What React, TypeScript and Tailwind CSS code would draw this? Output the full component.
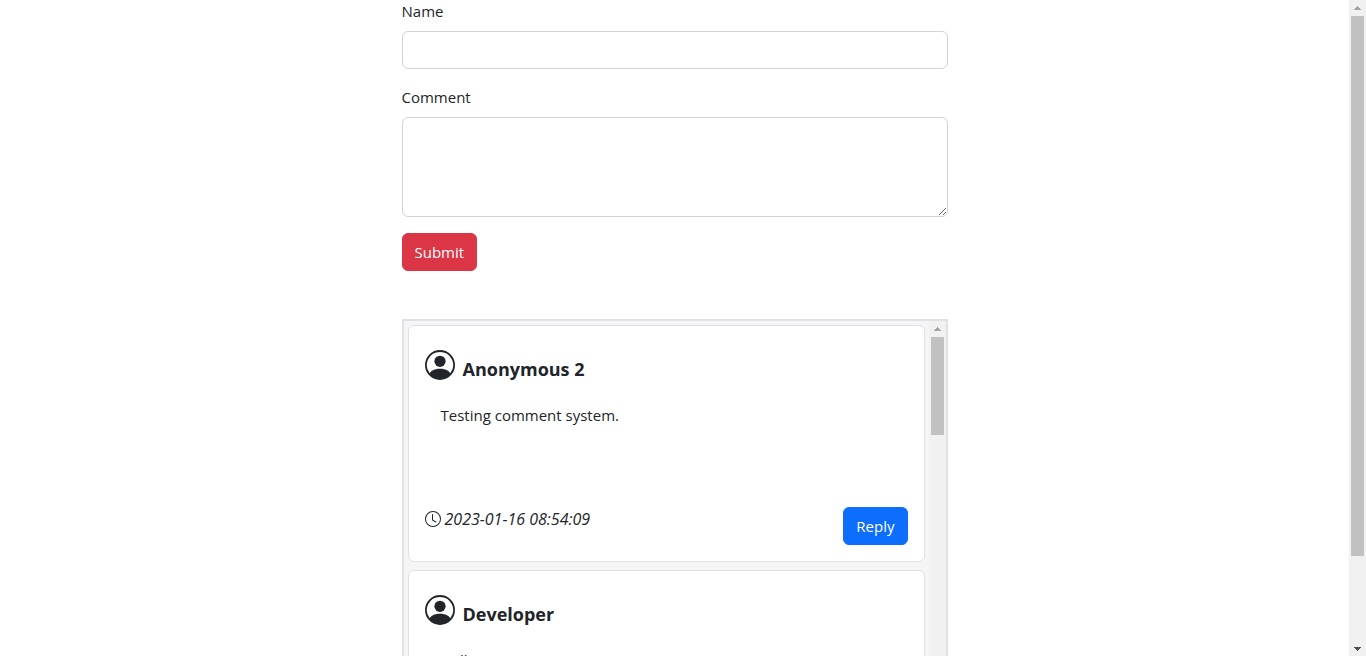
interface Comment {
  id: number;
  author: string;
  text: string;
  createdAt: string;
}

const comments: Comment[] = [
  { id: 2, author: 'Anonymous 2', text: 'Testing comment system.', createdAt: '2023-01-16 08:54:09' },
  { id: 1, author: 'Developer', text: 'Hello?', createdAt: '2023-01-16 08:52:41' },
];

function PersonIcon() {
  return (
    <svg className="size-[30px] shrink-0" viewBox="0 0 16 16" fill="currentColor" aria-hidden="true">
      <path d="M11 6a3 3 0 1 1-6 0 3 3 0 0 1 6 0" />
      <path
        fillRule="evenodd"
        d="M0 8a8 8 0 1 1 16 0A8 8 0 0 1 0 8m8-7a7 7 0 0 0-5.468 11.37C3.242 11.226 4.805 10 8 10s4.757 1.225 5.468 2.37A7 7 0 0 0 8 1"
      />
    </svg>
  );
}

function ClockIcon() {
  return (
    <svg className="size-4 shrink-0" viewBox="0 0 16 16" fill="currentColor" aria-hidden="true">
      <path d="M8 3.5a.5.5 0 0 0-1 0V9a.5.5 0 0 0 .252.434l3.5 2a.5.5 0 0 0 .496-.868L8 8.71z" />
      <path d="M8 16A8 8 0 1 0 8 0a8 8 0 0 0 0 16m7-8A7 7 0 1 1 1 8a7 7 0 0 1 14 0" />
    </svg>
  );
}

function ScrollArrow({ down = false }: { down?: boolean }) {
  return (
    <svg className="h-4 w-full shrink-0" viewBox="0 0 17 16" shapeRendering="crispEdges" aria-hidden="true">
      {down ? <path d="M5 7h7L8.5 11z" fill="#505050" /> : <path d="M5 10h7L8.5 6z" fill="#a3a3a3" />}
    </svg>
  );
}

// thumb is the visible share of the content, in percent
function Scrollbar({ thumb }: { thumb: number }) {
  return (
    <div className="flex w-[17px] shrink-0 flex-col bg-[#f1f1f1]">
      <ScrollArrow />
      <div className="flex-1 px-0.5">
        <div className="bg-[#c1c1c1]" style={{ height: `${thumb}%` }} />
      </div>
      <ScrollArrow down />
    </div>
  );
}

function CommentCard({ comment }: { comment: Comment }) {
  return (
    <article className="shrink-0 rounded-md border border-[#dee2e6] bg-white p-4">
      <header className="flex items-start gap-2 pt-2">
        <PersonIcon />
        <h5 className="pt-[7px] text-lg leading-6 font-bold">{comment.author}</h5>
      </header>
      <p className="mt-[22px] min-h-[104px] px-4">{comment.text}</p>
      <footer className="flex items-start justify-between">
        <div className="flex items-center gap-1 text-base leading-6 italic">
          <ClockIcon />
          <time>{comment.createdAt}</time>
        </div>
        <button type="button" className="rounded-md border border-[#0d6efd] bg-[#0d6efd] px-3 py-1.5 text-white">
          Reply
        </button>
      </footer>
    </article>
  );
}

export default function App() {
  return (
    <div className="flex h-screen overflow-hidden bg-white font-['Open_Sans','Noto_Sans',sans-serif] text-[15px] leading-6 text-[#212529]">
      <main className="min-w-0 flex-1 overflow-y-auto [scrollbar-width:none]">
        <div className="mx-auto -mt-px max-w-[546px]">
          <form className="mb-12" onSubmit={(e) => e.preventDefault()}>
            <div className="mb-4">
              <label htmlFor="name" className="mb-2 block">
                Name
              </label>
              <input
                id="name"
                type="text"
                className="block h-[38px] w-full rounded-md border border-[#ced4da] bg-white px-3 py-1.5"
              />
            </div>
            <div className="mb-4">
              <label htmlFor="comment" className="mb-2 block">
                Comment
              </label>
              <textarea
                id="comment"
                className="block h-[100px] w-full resize-y rounded-md border border-[#ced4da] bg-white px-3 py-1.5"
              />
            </div>
            <button type="submit" className="rounded-md border border-[#dc3545] bg-[#dc3545] px-3 py-1.5 text-white">
              Submit
            </button>
          </form>

          <section className="flex h-[400px] border-2 border-[#dee2e6] bg-[#f5f5f5]">
            <div className="flex min-w-0 flex-1 flex-col gap-2 overflow-y-auto p-1 [scrollbar-width:none]">
              {comments.map((comment) => (
                <CommentCard key={comment.id} comment={comment} />
              ))}
            </div>
            <Scrollbar thumb={27} />
          </section>
        </div>
      </main>
      <Scrollbar thumb={86.6} />
    </div>
  );
}
